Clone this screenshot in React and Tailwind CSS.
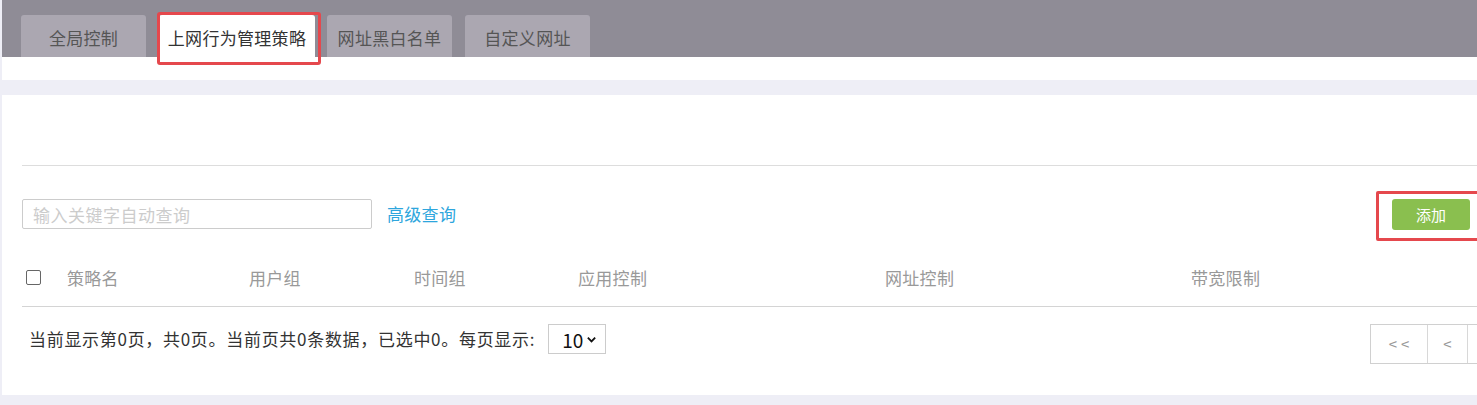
import { useState } from "react";

const tabs = ["全局控制", "上网行为管理策略", "网址黑白名单", "自定义网址"];

const columns = [
  { label: "策略名", w: "w-[182px]" },
  { label: "用户组", w: "w-[165px]" },
  { label: "时间组", w: "w-[164px]" },
  { label: "应用控制", w: "w-[307px]" },
  { label: "网址控制", w: "w-[306px]" },
  { label: "带宽限制", w: "w-[200px]" },
];

export default function App() {
  const [active, setActive] = useState(1);
  const [keyword, setKeyword] = useState("");
  const [pageSize] = useState("10");

  return (
    <div
      className="w-[1477px] h-[405px] overflow-hidden bg-[#eeeef6] pl-[2px] text-[17px] text-[#333]"
      style={{ fontFamily: '"Noto Sans CJK SC", "Noto Sans", sans-serif' }}
    >
      {/* top tab bar */}
      <div className="h-[57px] bg-[#8f8c96] flex items-end pl-[19px]">
        {tabs.map((t, i) => (
          <div
            key={t}
            onClick={() => setActive(i)}
            className={
              "relative h-[42px] flex items-center justify-center pt-[2px] rounded-t-[3px] cursor-pointer leading-none tracking-[0.3px] " +
              (i === 0 ? "" : i === 2 ? "ml-[12px] " : "ml-[13px] ") +
              (i === active
                ? "w-[156px] bg-white text-[#333]"
                : "w-[125px] bg-[#aba7b1] text-[#555]")
            }
          >
            {t}
            {i === 1 && (
              <div className="absolute -left-[2px] -right-[6px] -top-[3px] -bottom-[8px] border-[3px] border-[#e5484d] rounded-[3px] pointer-events-none" />
            )}
          </div>
        ))}
      </div>
      <div className="h-[23px] bg-white" />
      <div className="h-[15px]" />

      {/* main panel */}
      <div className="h-[300px] bg-white pl-[20px] overflow-hidden">
        <div className="h-[70px]" />
        <div className="w-[1500px] border-t border-[#dddddd]" />

        {/* search row */}
        <div className="w-[1448px] mt-[33px] h-[30px] flex items-center">
          <input
            value={keyword}
            onChange={(e) => setKeyword(e.target.value)}
            placeholder="输入关键字自动查询"
            className="w-[350px] h-[30px] border border-[#cccccc] rounded-[2px] px-[10px] text-[17px] tracking-[0.5px] outline-none placeholder:text-[#cccccc]"
          />
          <a className="ml-[15px] text-[#2ea6dd] cursor-pointer tracking-[0.3px]">高级查询</a>
          <div className="ml-auto relative">
            <button className="w-[78px] h-[31px] bg-[#8abf4f] text-white text-[15px] rounded-[3px] leading-none">
              添加
            </button>
            <div className="absolute -left-[16px] -right-[40px] -top-[8px] -bottom-[11px] border-[3px] border-[#e5484d] rounded-[2px] pointer-events-none" />
          </div>
        </div>

        {/* table header */}
        <div className="w-[1500px] mt-[20px] h-[58px] flex items-center border-b border-[#d4d4d4] text-[#999] tracking-[0.3px]">
          <div className="w-[45px] pl-[4px] flex items-center">
            <span className="w-[15px] h-[15px] border border-[#666] rounded-[2px] bg-white" />
          </div>
          {columns.map((c) => (
            <div key={c.label} className={c.w}>
              {c.label}
            </div>
          ))}
        </div>

        {/* footer */}
        <div className="w-[1542px] mt-[17px] flex items-start">
          <div className="h-[30px] flex items-center pl-[7px]">
            <span className="tracking-[0.7px]">当前显示第0页，共0页。当前页共0条数据，已选中0。每页显示:</span>
            <div className="ml-[13px] w-[58px] h-[30px] border border-[#cccccc] flex items-center pl-[13px] gap-[3px] text-[#111] text-[19px]">
              <span className="leading-none">{pageSize}</span>
              <svg width="11" height="11" viewBox="0 0 12 12" className="mt-[1px]">
                <path d="M2 4l4 4 4-4" fill="none" stroke="#111" strokeWidth="2" />
              </svg>
            </div>
          </div>
          <div className="ml-auto h-[40px] flex border border-[#d0d0d0] text-[#999] text-[15px]">
            <div className="w-[56px] flex items-center justify-center tracking-[4px] pl-[4px]">
              &lt;&lt;
            </div>
            <div className="w-[40px] flex items-center justify-center border-l border-[#d8d8d8]">&lt;</div>
            <div className="w-[40px] border-l border-[#d8d8d8]" />
            <div className="w-[56px] border-l border-[#d8d8d8]" />
          </div>
        </div>
      </div>
    </div>
  );
}
